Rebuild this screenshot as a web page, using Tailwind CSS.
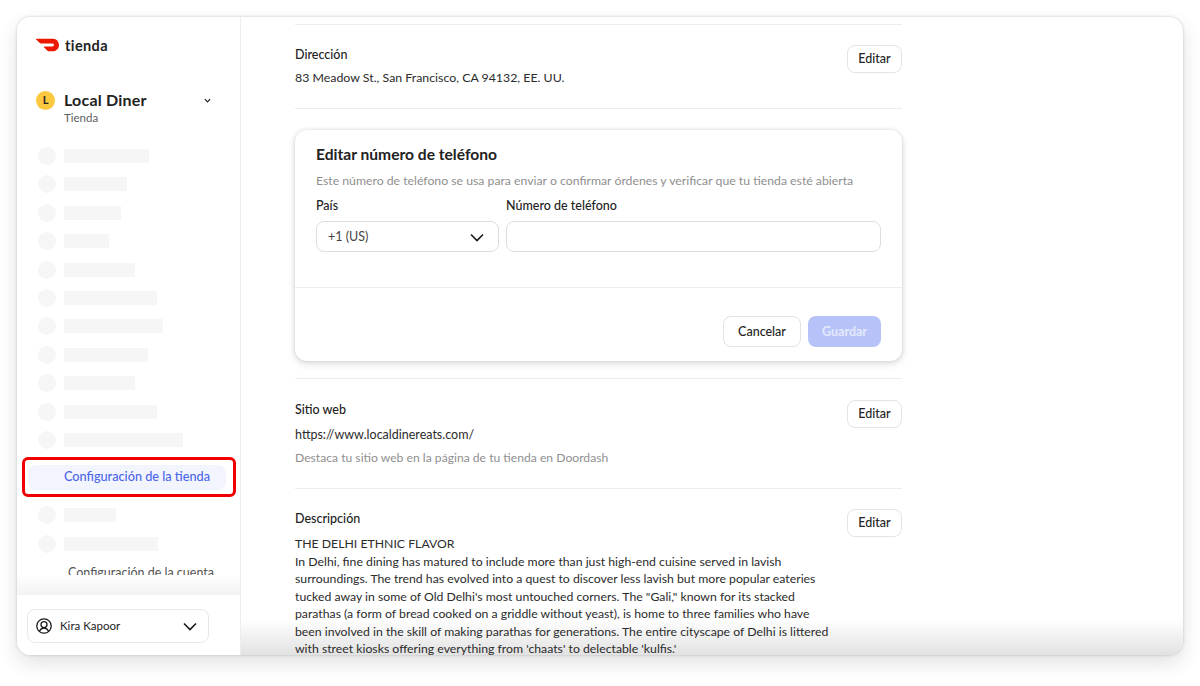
<!DOCTYPE html>
<html lang="es">
<head>
    <meta charset="UTF-8">
    <title>Configuración de la tienda</title>
    <script src="https://cdn.jsdelivr.net/npm/@tailwindcss/browser@4"></script>
</head>
<body class="bg-white h-[686px] w-[1200px] overflow-hidden font-['Lato',sans-serif] text-[#222]">
    <div class="pt-[17px] px-[17px]">
        <!-- Window -->
        <div class="relative flex h-[638px] w-[1166px] overflow-hidden rounded-[14px] bg-white shadow-[0_0_3px_rgba(0,0,0,0.2),0_8px_20px_rgba(0,0,0,0.12)]">

            <!-- Bottom fade, behind the page text -->
            <div class="pointer-events-none absolute bottom-0 left-[224px] right-0 h-[36px] bg-gradient-to-b from-white/0 to-[#e2e2e2]"></div>

            <!-- Sidebar -->
            <aside class="relative z-10 flex w-[224px] shrink-0 flex-col border-r border-[#ededed] bg-white">
                <div class="flex h-[638px] flex-col">
                    <div class="flex items-center gap-[6px] pl-[19px] pt-[19px] h-[37px]">
                        <svg class="w-[23px] h-[14px]" viewBox="0 4.5 24 15" fill="#eb1700" preserveAspectRatio="none"><path d="M23.071 8.409a6.09 6.09 0 00-5.396-3.228H.584A.589.589 0 00.17 6.184L3.894 9.93a1.752 1.752 0 001.242.516h12.049a1.554 1.554 0 11.031 3.108H8.91a.589.589 0 00-.415 1.003l3.725 3.747a1.75 1.75 0 001.242.516h3.757c4.887 0 8.584-5.225 5.852-9.91"/></svg>
                        <span class="mt-[1px] text-[14.5px] font-bold tracking-[0.4px]">tienda</span>
                    </div>

                    <div class="flex pl-[19px] pr-[29px] pt-[29px]">
                        <div class="mt-[8px] flex h-[19px] w-[19px] items-center justify-center rounded-full bg-[#fcc83f] text-[11px] font-bold">L</div>
                        <div class="ml-[9px] flex-1">
                            <div class="text-[16px] leading-[20px] mt-[7px] font-bold tracking-[0.2px]">Local Diner</div>
                            <div class="mt-[1px] text-[11.5px] leading-[14px] text-[#606060]">Tienda</div>
                        </div>
                        <svg class="mt-[14px] w-[7px] h-[7px]" viewBox="0 0 8 8" fill="none" stroke="#222" stroke-width="1.4"><path d="M1 2.500l3 3 3-3"/></svg>
                    </div>

                    <!-- Nav -->
                    <nav class="relative mt-[22px] h-[448px] overflow-hidden">
                        <div class="flex flex-col gap-[10.4px] pl-[21px]">
                            <div class="flex items-center gap-[8px]"><span class="h-[18px] w-[18px] rounded-full bg-[#f6f6f6]"></span><span class="h-[14px] w-[85px] bg-[#f6f6f6]"></span></div>
                            <div class="flex items-center gap-[8px]"><span class="h-[18px] w-[18px] rounded-full bg-[#f6f6f6]"></span><span class="h-[14px] w-[63px] bg-[#f6f6f6]"></span></div>
                            <div class="flex items-center gap-[8px]"><span class="h-[18px] w-[18px] rounded-full bg-[#f6f6f6]"></span><span class="h-[14px] w-[57px] bg-[#f6f6f6]"></span></div>
                            <div class="flex items-center gap-[8px]"><span class="h-[18px] w-[18px] rounded-full bg-[#f6f6f6]"></span><span class="h-[14px] w-[45px] bg-[#f6f6f6]"></span></div>
                            <div class="flex items-center gap-[8px]"><span class="h-[18px] w-[18px] rounded-full bg-[#f6f6f6]"></span><span class="h-[14px] w-[71px] bg-[#f6f6f6]"></span></div>
                            <div class="flex items-center gap-[8px]"><span class="h-[18px] w-[18px] rounded-full bg-[#f6f6f6]"></span><span class="h-[14px] w-[93px] bg-[#f6f6f6]"></span></div>
                            <div class="flex items-center gap-[8px]"><span class="h-[18px] w-[18px] rounded-full bg-[#f6f6f6]"></span><span class="h-[14px] w-[99px] bg-[#f6f6f6]"></span></div>
                            <div class="flex items-center gap-[8px]"><span class="h-[18px] w-[18px] rounded-full bg-[#f6f6f6]"></span><span class="h-[14px] w-[84px] bg-[#f6f6f6]"></span></div>
                            <div class="flex items-center gap-[8px]"><span class="h-[18px] w-[18px] rounded-full bg-[#f6f6f6]"></span><span class="h-[14px] w-[71px] bg-[#f6f6f6]"></span></div>
                            <div class="flex items-center gap-[8px]"><span class="h-[18px] w-[18px] rounded-full bg-[#f6f6f6]"></span><span class="h-[14px] w-[93px] bg-[#f6f6f6]"></span></div>
                            <div class="flex items-center gap-[8px]"><span class="h-[18px] w-[18px] rounded-full bg-[#f6f6f6]"></span><span class="h-[14px] w-[119px] bg-[#f6f6f6]"></span></div>
                        </div>

                        <div class="ml-[11px] mt-[16px] flex h-[25px] w-[198px] items-center rounded-[8px] bg-[#f3f5fe] pb-[1px] pl-[36px] text-[12.7px] font-medium text-[#4a65e8]">Configuración de la tienda</div>

                        <div class="mt-[16px] flex flex-col gap-[11px] pl-[21px]">
                            <div class="flex items-center gap-[8px]"><span class="h-[18px] w-[18px] rounded-full bg-[#f6f6f6]"></span><span class="h-[14px] w-[52px] bg-[#f6f6f6]"></span></div>
                            <div class="flex items-center gap-[8px]"><span class="h-[18px] w-[18px] rounded-full bg-[#f6f6f6]"></span><span class="h-[14px] w-[94px] bg-[#f6f6f6]"></span></div>
                        </div>
                        <div class="mt-[12px] pl-[51px] text-[12.5px] leading-[16px] text-[#555]">Configuración de la cuenta</div>

                        <div class="absolute inset-x-0 bottom-0 h-[20px] bg-gradient-to-b from-white to-[#f3f3f3]"></div>
                    </nav>

                    <!-- User -->
                    <div class="flex-1 bg-white pl-[10px] pt-[14px]">
                        <div class="flex h-[34px] w-[182px] items-center rounded-[8px] border border-[#e8e8e8] pl-[8px] pr-[11px]">
                            <svg class="h-[16px] w-[16px]" viewBox="0 0 16 16" fill="none" stroke="#191919" stroke-width="1.3"><circle cx="8" cy="8" r="7.2"/><circle cx="8" cy="6.600" r="3"/><path d="M3.400 13.200c1-2 2.700-3 4.600-3s3.600 1 4.600 3"/></svg>
                            <span class="ml-[8px] flex-1 text-[11.5px]">Kira Kapoor</span>
                            <svg class="h-[9px] w-[14px]" viewBox="0 0 14 9" fill="none" stroke="#191919" stroke-width="1.6"><path d="M1 1.500l6 6 6-6"/></svg>
                        </div>
                    </div>
                </div>
            </aside>

            <!-- Main -->
            <main class="relative flex-1 overflow-hidden pl-[54px] text-[12.5px]">
                <div class="w-[607px]">
                    <div class="mt-[7px] flex h-[85px] justify-between border-y border-[#ededed] pt-[21px]">
                        <div>
                            <div class="leading-[18px] font-medium">Dirección</div>
                            <div class="mt-[5px] text-[12.35px] leading-[18px] text-[#2b2b2b]">83 Meadow St., San Francisco, CA 94132, EE. UU.</div>
                        </div>
                        <button class="-mt-[1px] h-[28px] w-[55px] rounded-[8px] border border-[#e4e4e4] pt-[1px] text-[12.5px] font-medium">Editar</button>
                    </div>

                    <!-- Phone form -->
                    <div class="mt-[21px] h-[231px] rounded-[12px] bg-white shadow-[0_0_4px_rgba(0,0,0,0.12),0_3px_8px_rgba(0,0,0,0.12)]">
                        <div class="h-[158px] border-b border-[#ededed] px-[21px] pt-[14px]">
                            <h2 class="text-[15.6px] leading-[20px] font-bold">Editar número de teléfono</h2>
                            <p class="mt-[9px] text-[12.25px] leading-[16px] text-[#8f8f8f]">Este número de teléfono se usa para enviar o confirmar órdenes y verificar que tu tienda esté abierta</p>
                            <div class="mt-[8px] flex gap-[7px]">
                                <div class="w-[183px]">
                                    <div class="leading-[18px] font-medium">País</div>
                                    <div class="mt-[6px] flex h-[31px] items-center justify-between rounded-[8px] border border-[#dedede] pl-[11px] pr-[14px] pt-[2px]">
                                        <span class="text-[#444]">+1 (US)</span>
                                        <svg class="h-[9px] w-[14px]" viewBox="0 0 14 9" fill="none" stroke="#191919" stroke-width="1.6"><path d="M1 1.500l6 6 6-6"/></svg>
                                    </div>
                                </div>
                                <div class="w-[375px]">
                                    <div class="leading-[18px] font-medium">Número de teléfono</div>
                                    <div class="mt-[6px] h-[31px] rounded-[8px] border border-[#dedede]"></div>
                                </div>
                            </div>
                        </div>
                        <div class="flex justify-end gap-[7px] px-[21px] pt-[28px]">
                            <button class="h-[31px] w-[78px] rounded-[8px] border border-[#e2e2e2] pt-[1px] text-[12.5px] font-medium">Cancelar</button>
                            <button class="h-[31px] w-[73px] rounded-[8px] bg-[#b7c3f8] pt-[1px] text-[12.5px] font-bold text-[#e4e9fd]">Guardar</button>
                        </div>
                    </div>

                    <div class="mt-[17px] flex h-[111px] justify-between border-b border-t border-[#ededed] pt-[22px]">
                        <div>
                            <div class="leading-[18px] font-medium">Sitio web</div>
                            <div class="mt-[7px] leading-[18px] text-[#2b2b2b]">https://www.localdinereats.com/</div>
                            <div class="mt-[5px] text-[12.15px] leading-[18px] text-[#8f8f8f]">Destaca tu sitio web en la página de tu tienda en Doordash</div>
                        </div>
                        <button class="-mt-[1px] h-[28px] w-[55px] rounded-[8px] border border-[#e4e4e4] pt-[1px] text-[12.5px] font-medium">Editar</button>
                    </div>

                    <div class="flex justify-between pt-[21px]">
                        <div class="w-[540px]">
                            <div class="leading-[18px] font-medium">Descripción</div>
                            <p class="mt-[7px] whitespace-nowrap text-[12.25px] leading-[17.5px] text-[#2b2b2b]">THE DELHI ETHNIC FLAVOR<br>In Delhi, fine dining has matured to include more than just high-end cuisine served in lavish<br>surroundings. The trend has evolved into a quest to discover less lavish but more popular eateries<br>tucked away in some of Old Delhi's most untouched corners. The "Gali," known for its stacked<br>parathas (a form of bread cooked on a griddle without yeast), is home to three families who have<br>been involved in the skill of making parathas for generations. The entire cityscape of Delhi is littered<br>with street kiosks offering everything from 'chaats' to delectable 'kulfis.'</p>
                        </div>
                        <button class="-mt-[1px] h-[28px] w-[55px] rounded-[8px] border border-[#e4e4e4] pt-[1px] text-[12.5px] font-medium">Editar</button>
                    </div>
                </div>
            </main>

            <!-- Highlight around the active item -->
            <div class="absolute z-20 left-[5px] top-[440px] h-[40px] w-[214px] rounded-[6px] border-[3px] border-[#f00000]"></div>
        </div>
    </div>
</body>
</html>
